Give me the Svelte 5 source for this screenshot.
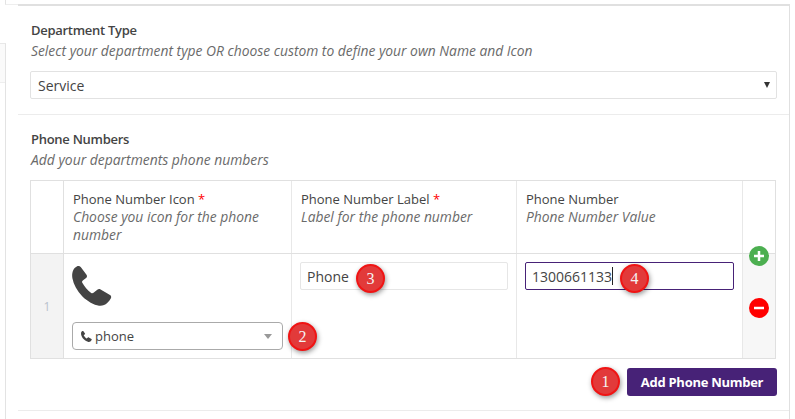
<script lang="ts">
  const phonePath = 'M4.800.4C6.300-.3 7.900 0 8.900 1.300l5.600 7.500c.8 1.100.6 2.300-.4 3.100l-3.300 2.600c-.8.600-1 1.400-.5 2.300 2.200 4 5 7.300 8.900 10.100.8.600 1.600.5 2.300-.1l3.800-3.100c1-.9 2.200-1 3.300-.3l9.400 5.600c1.200.7 1.500 2 .9 3.200-.9 1.800-2.100 3.500-3.700 4.900-2.200 2-5.100 3-8.200 2.600C22 38.800 15.500 35.500 10.200 30.200 5 25 1.600 18.400.4 12.300-.4 8 .7 2.300 4.800.4z'
</script>

<div class="page">
  <div class="backdrop-left">
    <div class="stub"></div>
  </div>
  <div class="modal">
    <section class="group first">
      <h4>Department Type</h4>
      <p class="hint">Select your department type OR choose custom to define your own Name and Icon</p>
      <div class="select">
        <span>Service</span>
        <i class="caret"></i>
      </div>
    </section>

    <section class="group second">
      <h4>Phone Numbers</h4>
      <p class="hint wide">Add your departments phone numbers</p>

      <div class="repeater">
        <div class="grid head">
          <div class="cell idx"></div>
          <div class="cell th">
            <div>Phone Number Icon <span class="req">*</span></div>
            <em>Choose you icon for the phone number</em>
          </div>
          <div class="cell th">
            <div>Phone Number Label <span class="req">*</span></div>
            <em>Label for the phone number</em>
          </div>
          <div class="cell th">
            <div>Phone Number</div>
            <em>Phone Number Value</em>
          </div>
          <div class="cell side"></div>
        </div>
        <div class="grid row">
          <div class="cell idx num">1</div>
          <div class="cell icon-cell">
            <svg class="big-phone" viewBox="0 0 40 40" aria-hidden="true"><path d={phonePath} /></svg>
            <div class="picker">
              <svg class="mini-phone" viewBox="0 0 40 40" aria-hidden="true"><path d={phonePath} /></svg>
              <span>phone</span>
              <i class="arrow"></i>
              <b class="badge two">2</b>
            </div>
          </div>
          <div class="cell">
            <div class="field">
              Phone
              <b class="badge three">3</b>
            </div>
          </div>
          <div class="cell">
            <div class="field focus">
              <span>1300661133</span><span class="cursor"></span>
              <b class="badge four">4</b>
            </div>
          </div>
          <div class="cell side"></div>
        </div>
        <span class="round add">
          <svg viewBox="0 0 20 20"><path d="M10 5v10M5 10h10" /></svg>
        </span>
        <span class="round remove">
          <svg viewBox="0 0 20 20"><path d="M5 10h10" /></svg>
        </span>
      </div>

      <div class="actions">
        <b class="badge">1</b>
        <button>Add Phone Number</button>
      </div>
    </section>
  </div>
</div>

<style>
  :global(body) {
    margin: 0;
    background: #fff;
  }
  .page {
    width: 795px;
    height: 419px;
    display: flex;
    overflow: hidden;
    font-family: "Open Sans", sans-serif;
    font-size: 13px;
    color: #444;
  }
  .backdrop-left {
    width: 18px;
    flex-shrink: 0;
    position: relative;
    box-sizing: border-box;
    padding-top: 43px;
  }
  .backdrop-left::before {
    content: '';
    position: absolute;
    left: 5px;
    top: 0;
    height: 5px;
    width: 13px;
    box-sizing: border-box;
    border-left: 1px solid #e3e3e3;
    border-bottom: 1px solid #eee;
  }
  .stub {
    width: 6px;
    height: 376px;
    box-sizing: border-box;
    border-top: 1px solid #e8e8e8;
    border-right: 1px solid #e3e3e3;
    background: linear-gradient(#fafafa 38px, #eee 38px, #eee 39px, #fff 39px);
  }
  .modal {
    width: 772px;
    flex-shrink: 0;
    box-sizing: border-box;
    border-top: 2px solid #e0e0e0;
    margin-top: 4px;
    border-right: 1px solid #e0e0e0;
    background: #fff;
  }
  .group {
    padding: 15px 12px 0;
    box-sizing: border-box;
    border-bottom: 1px solid #ececec;
  }
  .first {
    height: 109px;
  }
  .second {
    height: 296px;
  }
  h4 {
    margin: 0;
    padding-left: 1px;
    font-size: 13px;
    line-height: 18px;
    font-weight: 600;
    letter-spacing: -0.28px;
    color: #444;
  }
  .hint {
    margin: 3px 0 0;
    padding-left: 1px;
    font-size: 13.83px;
    line-height: 18px;
    font-style: italic;
    color: #6a6a6a;
  }
  .hint.wide {
    font-size: 13.9px;
  }
  .select {
    margin-top: 11px;
    height: 28px;
    box-sizing: border-box;
    border: 1px solid #e2e2e2;
    border-radius: 2px;
    display: flex;
    align-items: center;
    justify-content: space-between;
    padding: 0 6px 0 7px;
    font-size: 14px;
    color: #444;
  }
  .caret {
    border: 3.5px solid transparent;
    border-top: 6px solid #333;
    border-bottom: 0;
    margin-top: -1px;
  }
  .repeater {
    position: relative;
    margin-top: 11px;
    width: 746px;
    box-sizing: border-box;
    border: 1px solid #e0e0e0;
  }
  .grid {
    display: grid;
    grid-template-columns: 33px 228px 225px 226px 1fr;
  }
  .head {
    height: 72px;
    border-bottom: 1px solid #e0e0e0;
  }
  .row {
    height: 104px;
  }
  .cell {
    border-right: 1px solid #e8e8e8;
    box-sizing: border-box;
    padding: 0 8px;
    min-width: 0;
  }
  .cell:last-child {
    border-right: 0;
  }
  .th {
    padding: 9px 9px 0;
    line-height: 18px;
    color: #444;
  }
  .th em {
    display: block;
    font-size: 13.85px;
    color: #6a6a6a;
  }
  .req {
    color: #f00;
  }
  .idx {
    border-right-color: #e0e0e0;
  }
  .num {
    background: #f3f3f3;
    color: #b9c2cc;
    font-size: 12px;
    display: flex;
    align-items: center;
    justify-content: center;
    padding: 0;
  }
  .row .side {
    background: #f7f7f7;
  }
  .icon-cell {
    display: flex;
    flex-direction: column;
    padding-top: 12px;
  }
  .big-phone {
    width: 40px;
    height: 40px;
    fill: #444;
  }
  .mini-phone {
    width: 11px;
    height: 11px;
    fill: #444;
    margin-right: 3px;
  }
  .picker {
    position: relative;
    margin-top: 16px;
    height: 28px;
    box-sizing: border-box;
    border: 1px solid #aaa;
    border-radius: 4px;
    display: flex;
    align-items: center;
    padding: 0 8px;
    line-height: 1;
  }
  .arrow {
    position: absolute;
    right: 10px;
    top: 11px;
    border: 4px solid transparent;
    border-top: 5px solid #999;
    border-bottom: 0;
  }
  .field {
    position: relative;
    margin-top: 8px;
    height: 28px;
    box-sizing: border-box;
    border: 1px solid #e6e6e6;
    border-radius: 2px;
    padding: 0 6px;
    font-size: 14px;
    display: flex;
    align-items: center;
  }
  .focus {
    border-color: #472277;
  }
  .cursor {
    width: 1px;
    height: 18px;
    background: #222;
  }
  .round {
    position: absolute;
    right: 6px;
    width: 20px;
    height: 20px;
    border-radius: 50%;
  }
  .round svg {
    display: block;
    width: 20px;
    height: 20px;
    fill: none;
    stroke: #fff;
    stroke-width: 2.5;
  }
  .add {
    top: 65px;
    background: #4caf50;
  }
  .remove {
    top: 117px;
    background: #f00;
  }
  .badge {
    width: 29px;
    height: 29px;
    box-sizing: border-box;
    border-radius: 50%;
    border: 2px solid #f01414;
    background: #e23a3a;
    color: #f4f4f4;
    font-family: "Liberation Serif", serif;
    font-size: 16px;
    font-weight: 400;
    display: flex;
    align-items: center;
    justify-content: center;
    box-shadow: 1px 2px 5px rgba(0, 0, 0, 0.4);
  }
  .two, .three, .four {
    position: absolute;
  }
  .two { right: -35px; top: -1px; }
  .three { left: 55px; top: 1px; }
  .four { left: 94px; top: 1px; }
  .actions {
    display: flex;
    justify-content: flex-end;
    align-items: center;
    gap: 7px;
    margin-top: 8px;
    width: 747px;
  }
  button {
    width: 150px;
    height: 28px;
    border: 0;
    border-radius: 3px;
    background: #472277;
    color: #fff;
    font-family: "Open Sans", sans-serif;
    font-size: 13px;
    font-weight: 700;
    letter-spacing: -0.28px;
    padding: 0;
  }
</style>
